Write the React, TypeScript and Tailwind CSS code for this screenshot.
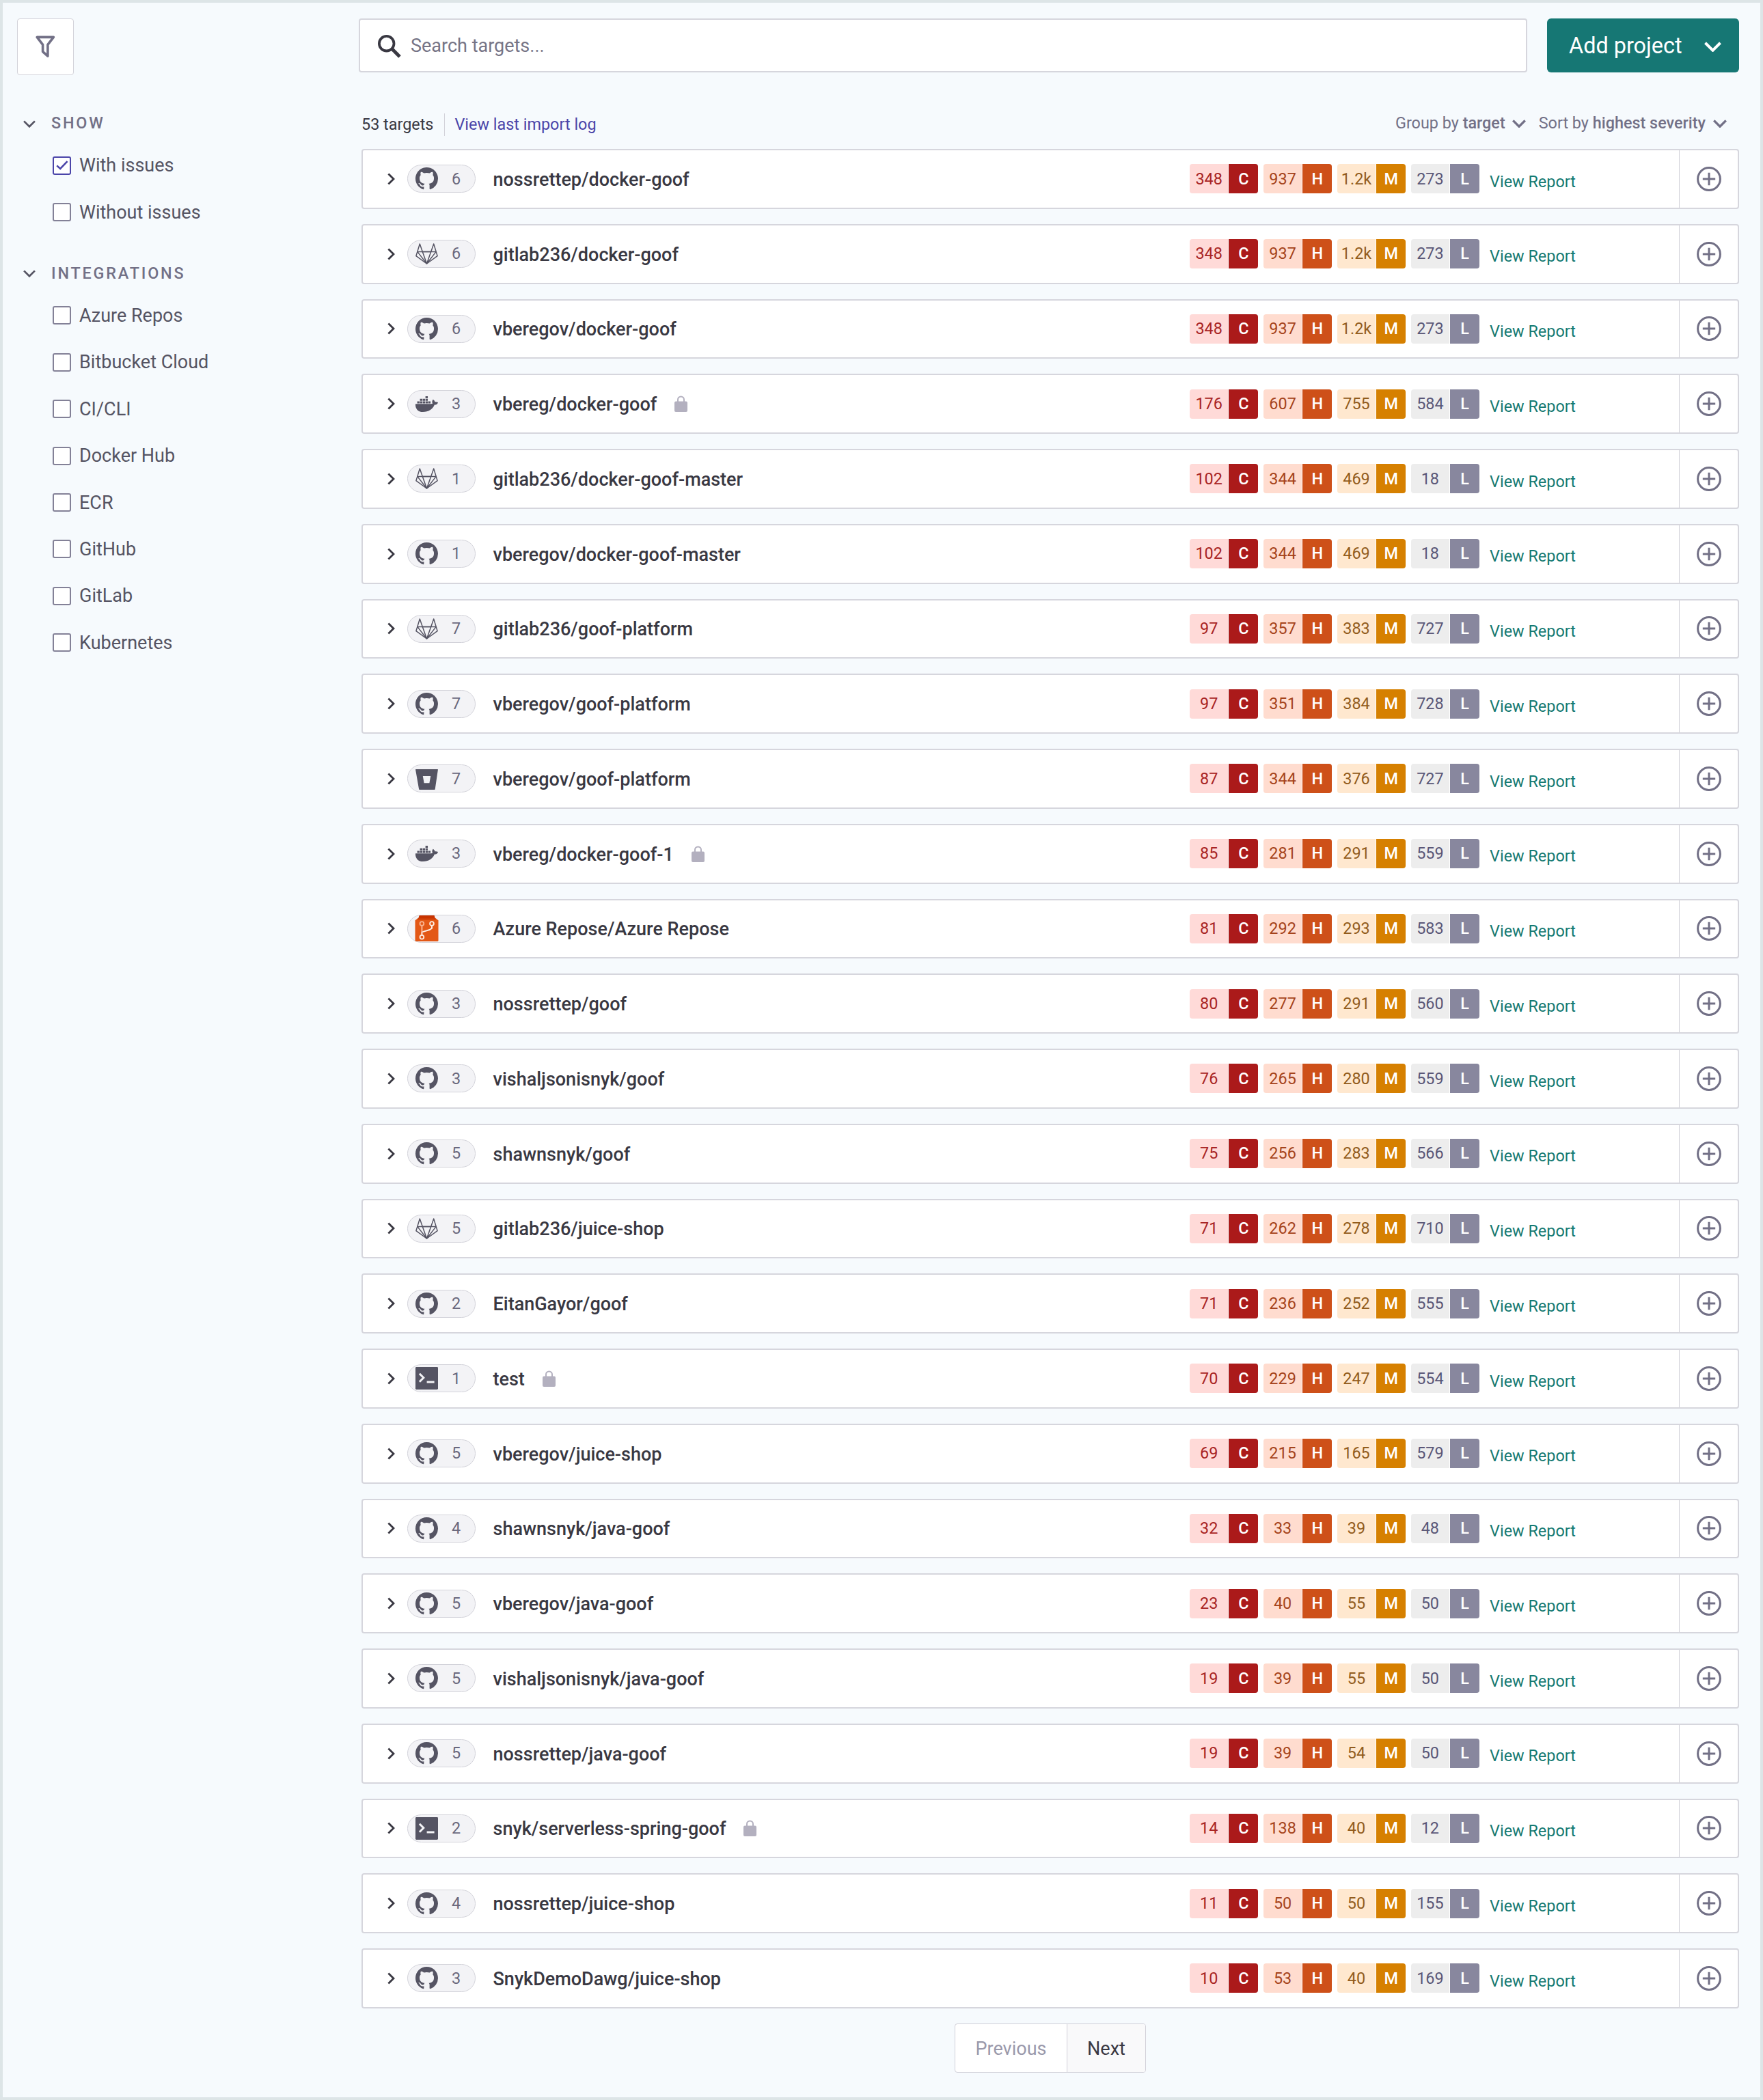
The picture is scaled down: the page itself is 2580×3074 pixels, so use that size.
import type { ReactNode } from 'react';
import { FaDocker } from 'react-icons/fa';

type Source = 'github' | 'gitlab' | 'docker' | 'bitbucket' | 'azure' | 'cli';

interface Target {
  source: Source;
  projects: number;
  name: string;
  issues: [string, string, string, string];
  locked?: boolean;
}

const targets: Target[] = [
  { source: 'github', projects: 6, name: 'nossrettep/docker-goof', issues: ['348', '937', '1.2k', '273'] },
  { source: 'gitlab', projects: 6, name: 'gitlab236/docker-goof', issues: ['348', '937', '1.2k', '273'] },
  { source: 'github', projects: 6, name: 'vberegov/docker-goof', issues: ['348', '937', '1.2k', '273'] },
  { source: 'docker', projects: 3, name: 'vbereg/docker-goof', issues: ['176', '607', '755', '584'], locked: true },
  { source: 'gitlab', projects: 1, name: 'gitlab236/docker-goof-master', issues: ['102', '344', '469', '18'] },
  { source: 'github', projects: 1, name: 'vberegov/docker-goof-master', issues: ['102', '344', '469', '18'] },
  { source: 'gitlab', projects: 7, name: 'gitlab236/goof-platform', issues: ['97', '357', '383', '727'] },
  { source: 'github', projects: 7, name: 'vberegov/goof-platform', issues: ['97', '351', '384', '728'] },
  { source: 'bitbucket', projects: 7, name: 'vberegov/goof-platform', issues: ['87', '344', '376', '727'] },
  { source: 'docker', projects: 3, name: 'vbereg/docker-goof-1', issues: ['85', '281', '291', '559'], locked: true },
  { source: 'azure', projects: 6, name: 'Azure Repose/Azure Repose', issues: ['81', '292', '293', '583'] },
  { source: 'github', projects: 3, name: 'nossrettep/goof', issues: ['80', '277', '291', '560'] },
  { source: 'github', projects: 3, name: 'vishaljsonisnyk/goof', issues: ['76', '265', '280', '559'] },
  { source: 'github', projects: 5, name: 'shawnsnyk/goof', issues: ['75', '256', '283', '566'] },
  { source: 'gitlab', projects: 5, name: 'gitlab236/juice-shop', issues: ['71', '262', '278', '710'] },
  { source: 'github', projects: 2, name: 'EitanGayor/goof', issues: ['71', '236', '252', '555'] },
  { source: 'cli', projects: 1, name: 'test', issues: ['70', '229', '247', '554'], locked: true },
  { source: 'github', projects: 5, name: 'vberegov/juice-shop', issues: ['69', '215', '165', '579'] },
  { source: 'github', projects: 4, name: 'shawnsnyk/java-goof', issues: ['32', '33', '39', '48'] },
  { source: 'github', projects: 5, name: 'vberegov/java-goof', issues: ['23', '40', '55', '50'] },
  { source: 'github', projects: 5, name: 'vishaljsonisnyk/java-goof', issues: ['19', '39', '55', '50'] },
  { source: 'github', projects: 5, name: 'nossrettep/java-goof', issues: ['19', '39', '54', '50'] },
  { source: 'cli', projects: 2, name: 'snyk/serverless-spring-goof', issues: ['14', '138', '40', '12'], locked: true },
  { source: 'github', projects: 4, name: 'nossrettep/juice-shop', issues: ['11', '50', '50', '155'] },
  { source: 'github', projects: 3, name: 'SnykDemoDawg/juice-shop', issues: ['10', '53', '40', '169'] },
];

const severities = [
  { letter: 'C', count: 'bg-[#ffdad8] text-[#a82424]', tag: 'bg-[#ab1a1a]' },
  { letter: 'H', count: 'bg-[#ffdccf] text-[#a5431b]', tag: 'bg-[#ce5019]' },
  { letter: 'M', count: 'bg-[#ffe8cf] text-[#925c1c]', tag: 'bg-[#d68000]' },
  { letter: 'L', count: 'bg-[#ededed] text-[#5a5777]', tag: 'bg-[#88879e]' },
];

function Chevron({ className, strokeWidth }: { className: string; strokeWidth: number }) {
  return (
    <svg viewBox="0 0 20 12" className={className} fill="none" stroke="currentColor" strokeWidth={strokeWidth}>
      <path d="M1.2 1.4 10 10.2 18.8 1.4" />
    </svg>
  );
}

function GitHubIcon() {
  return (
    <svg viewBox="0 0 16 16" className="size-[33px]" fill="currentColor">
      <path d="M8 0C3.58 0 0 3.58 0 8c0 3.54 2.29 6.53 5.47 7.59.4.07.55-.17.55-.38 0-.19-.01-.82-.01-1.49-2.01.37-2.53-.49-2.69-.94-.09-.23-.48-.94-.82-1.13-.28-.15-.68-.52-.01-.53.63-.01 1.08.58 1.23.82.72 1.21 1.87.87 2.33.66.07-.52.28-.87.51-1.07-1.78-.2-3.64-.89-3.64-3.95 0-.87.31-1.59.82-2.15-.08-.2-.36-1.02.08-2.12 0 0 .67-.21 2.2.82.64-.18 1.32-.27 2-.27.68 0 1.36.09 2 .27 1.53-1.04 2.2-.82 2.2-.82.44 1.1.16 1.92.08 2.12.51.56.82 1.27.82 2.15 0 3.07-1.87 3.75-3.65 3.95.29.25.54.73.54 1.48 0 1.07-.01 1.93-.01 2.2 0 .21.15.46.55.38A8.013 8.013 0 0016 8c0-4.42-3.58-8-8-8z" />
    </svg>
  );
}

function GitLabIcon() {
  return (
    <svg viewBox="0 0 33 31" className="h-[31px] w-[33px]" fill="none" stroke="currentColor" strokeWidth="1.5" strokeLinejoin="round">
      <path d="M6.3 1 .9 18.6 16.5 30 32.1 18.6 26.7 1 22.7 12.4H10.3Z" />
      <path d="M2.8 12.4H30.2M2.8 12.4 16.5 30 30.2 12.4M10.3 12.4 16.5 30 22.7 12.4" />
    </svg>
  );
}

function BitbucketIcon() {
  return (
    <svg viewBox="0 0 33 30" className="mt-0.5 h-[30px] w-[33px]" fill="currentColor" fillRule="evenodd">
      <path d="M.6 0H32.4q.6 0 .5.7L28.7 29.3q-.1.7-.8.7H5.9q-.7 0-.8-.7L.1.7Q0 0 .6 0ZM10.8 10l1.8 10.2h7.8L22.2 10Z" />
    </svg>
  );
}

function AzureReposIcon() {
  return (
    <svg viewBox="0 0 35 38" className="-mx-px h-[38px] w-[35px]" fill="none">
      <path d="M6.6 0H28.6L30.4 6H4.6Z" fill="#c93400" />
      <path d="M4.6 4H30.4L34.5 7.2V36.5Q34.5 38 33 38H2Q.5 38 .5 36.5V7.2Z" fill="#e35816" />
      <path d="M5 4.2H30L31 6H4Z" fill="#c93400" />
      <g stroke="#fdeee4" strokeWidth="1.8">
        <circle cx="25" cy="12" r="2.9" />
        <circle cx="10.4" cy="31.8" r="2.9" />
        <path d="M25 15V18.8L21.6 21 10.4 24.4V28.9" strokeWidth="2" />
      </g>
      <g stroke="#f9b491" strokeWidth="1.8">
        <circle cx="10.4" cy="12" r="2.9" />
        <path d="M10.4 15V24.4" strokeWidth="2" />
      </g>
    </svg>
  );
}

function TerminalIcon() {
  return (
    <svg viewBox="0 0 33 33" className="size-[33px]" fill="none">
      <rect width="33" height="33" rx="1.4" fill="currentColor" />
      <path d="M5.9 9.8 11.8 15.8 5.9 21.8" stroke="#f3f3f6" strokeWidth="3" />
      <path d="M16.6 22H27.6" stroke="#f3f3f6" strokeWidth="3" />
    </svg>
  );
}

const sourceIcons: Record<Source, ReactNode> = {
  github: <GitHubIcon />,
  gitlab: <GitLabIcon />,
  docker: <FaDocker className="h-[27px] w-[33px]" />,
  bitbucket: <BitbucketIcon />,
  azure: <AzureReposIcon />,
  cli: <TerminalIcon />,
};

function LockIcon() {
  return (
    <svg viewBox="0 0 19 24" className="ml-[26px] h-6 w-[19px] text-[#b3b0bf]">
      <rect y="8.6" width="19" height="15.4" rx="2" fill="currentColor" />
      <path d="M5 9.5V6a4.5 4.5 0 0 1 9 0v3.5" fill="none" stroke="currentColor" strokeWidth="2" />
    </svg>
  );
}

function PlusCircle() {
  return (
    <svg viewBox="0 0 36 36" className="size-9 text-[#727086]" fill="none" stroke="currentColor" strokeWidth="3">
      <circle cx="18" cy="18" r="16.4" />
      <path d="M18 8.8V27.2M8.8 18H27.2" />
    </svg>
  );
}

function FilterGroup({ title, options, checked }: { title: string; options: string[]; checked?: string }) {
  return (
    <section>
      <div className="flex h-[30px] items-center pt-0.5">
        <Chevron className="ml-[9px] h-[11px] w-[18px] text-[#555463]" strokeWidth={3} />
        <h2 className="ml-[23px] text-[23.4px] leading-none font-medium tracking-[2.8px] text-[#727086]">{title}</h2>
      </div>
      <div className="pt-[13px]">
        {options.map((option) => (
          <label key={option} className="flex h-[68.4px] items-center pl-[52px]">
            <span
              className={
                option === checked
                  ? 'flex size-[27px] items-center justify-center rounded-[3px] border-2 border-[#4b45a9] bg-white'
                  : 'flex size-[27px] items-center justify-center rounded-[3px] border-2 border-[#838197] bg-white'
              }
            >
              {option === checked && (
                <svg viewBox="0 0 18 14" className="h-[14px] w-[18px]" fill="none" stroke="#4b45a9" strokeWidth="2.6">
                  <path d="M1.2 7.4 6.2 12 16.6 1.2" />
                </svg>
              )}
            </span>
            <span className="ml-3 pt-px text-[27px] leading-none text-[#555463]">{option}</span>
          </label>
        ))}
      </div>
    </section>
  );
}

function TargetRow({ target }: { target: Target }) {
  return (
    <li className="flex h-[87.75px] items-stretch rounded-[4px] border-2 border-[#d6d6dd] bg-white">
      <div className="flex flex-1 items-center">
        <svg viewBox="0 0 12 18" className="ml-9 h-[18px] w-3 text-[#393842]" fill="none" stroke="currentColor" strokeWidth="2.8">
          <path d="M1.4 1.4 9 9 1.4 16.6" />
        </svg>
        <div className="ml-[17px] flex h-[41px] w-[100px] items-center rounded-full border border-[#d3d3da] bg-[#f3f3f6] pl-[11px] text-[#555463]">
          {sourceIcons[target.source]}
          <span className="flex-1 pt-px pr-px text-center text-[23.4px] leading-none text-[#6a687d]">{target.projects}</span>
        </div>
        <h3 className="ml-[25.5px] pt-[3px] text-[27px] leading-none font-medium text-[#393842]">{target.name}</h3>
        {target.locked && <LockIcon />}
      </div>
      <div className="flex w-[716px] items-center">
        <div className="flex gap-[7.5px] text-[23.4px] leading-none">
          {severities.map((severity, i) => (
            <div key={severity.letter} className="flex h-[43px] gap-px overflow-hidden rounded-[4px]">
              <span className={`flex w-[56.4px] items-center justify-center pt-px ${severity.count}`}>{target.issues[i]}</span>
              <span className={`flex w-[43px] items-center justify-center pt-px font-medium text-white ${severity.tag}`}>{severity.letter}</span>
            </div>
          ))}
        </div>
        <a className="ml-[15px] pt-[9px] text-[23.4px] leading-none text-[#157a72]">View Report</a>
      </div>
      <div className="flex w-[86px] items-center justify-center border-l border-[#d3d3da] pl-px">
        <PlusCircle />
      </div>
    </li>
  );
}

export default function App() {
  return (
    <div className="flex h-[3074px] w-[2580px] border-4 border-[#dde5e7] bg-[#f6fafd] font-[Roboto,sans-serif]">
      <aside className="w-[521px] shrink-0 pt-[23px] pl-[21px]">
        <button className="flex size-[83px] items-center justify-center rounded-[4px] border border-[#d3d3da] bg-white">
          <svg viewBox="0 0 29 33" className="h-[33px] w-[29px]" fill="none" stroke="#727086" strokeWidth="3.6" strokeLinejoin="round">
            <path d="M2.2 2.4H26.4L17.9 13.4V30.2L10.6 23.6V13.4Z" />
          </svg>
        </button>
        <div className="flex flex-col gap-[40px] pt-[55px]">
          <FilterGroup title="SHOW" options={['With issues', 'Without issues']} checked="With issues" />
          <FilterGroup
            title="INTEGRATIONS"
            options={['Azure Repos', 'Bitbucket Cloud', 'CI/CLI', 'Docker Hub', 'ECR', 'GitHub', 'GitLab', 'Kubernetes']}
          />
        </div>
      </aside>

      <main className="flex flex-1 flex-col pt-[23px] pr-[31px]">
        <header className="flex h-[79px] gap-[29px]">
          <div className="flex flex-1 items-center rounded-[4px] border-2 border-[#d6d6dd] bg-white pl-[26px]">
            <svg viewBox="0 0 34 34" className="mt-0.5 size-[34px] text-[#393842]" fill="none" stroke="currentColor">
              <circle cx="12.7" cy="12.7" r="10.8" strokeWidth="3.8" />
              <path d="M20.6 20.6 32 32" strokeWidth="5" />
            </svg>
            <span className="ml-[14px] pt-0.5 text-[27px] leading-none text-[#767486]">Search targets...</span>
          </div>
          <button className="flex w-[281px] items-center rounded-[6px] bg-[#167774] pl-8 text-white">
            <span className="pt-px text-[32.4px] leading-none">Add project</span>
            <Chevron className="ml-[32px] mt-1 h-[15px] w-[25px]" strokeWidth={3.2} />
          </button>
        </header>

        <div className="mt-[59px] mb-[19px] ml-1 flex h-[34px] items-center text-[23.4px] leading-none">
          <span className="pt-0.5 text-[#393842]">53 targets</span>
          <span className="ml-4 h-[33px] w-px bg-[#d3d3da]" />
          <a className="ml-[14px] pt-0.5 text-[#4b45a9]">View last import log</a>
          <div className="ml-auto flex items-center pr-[18px] pb-[3px] text-[#727086]">
            <span>
              Group by <b className="font-medium">target</b>
            </span>
            <Chevron className="ml-2.5 h-3 w-5" strokeWidth={3.4} />
            <span className="ml-[19px]">
              Sort by <b className="font-medium">highest severity</b>
            </span>
            <Chevron className="ml-[11px] h-3 w-5" strokeWidth={3.4} />
          </div>
        </div>

        <ul className="ml-1 flex flex-col gap-[22px]">
          {targets.map((target, i) => (
            <TargetRow key={i} target={target} />
          ))}
        </ul>

        <nav className="mt-[22px] ml-[872px] flex h-[72px] w-[280px] rounded-[4px] border border-[#d0cfd8] bg-white text-[27px] leading-none">
          <button className="w-[163px] pt-[3px] text-[#9a99ab]">Previous</button>
          <button className="flex-1 rounded-r-[3px] border-l border-[#d0cfd8] bg-[#f9f9fa] pt-[3px] text-[#393842]">Next</button>
        </nav>
      </main>
    </div>
  );
}
